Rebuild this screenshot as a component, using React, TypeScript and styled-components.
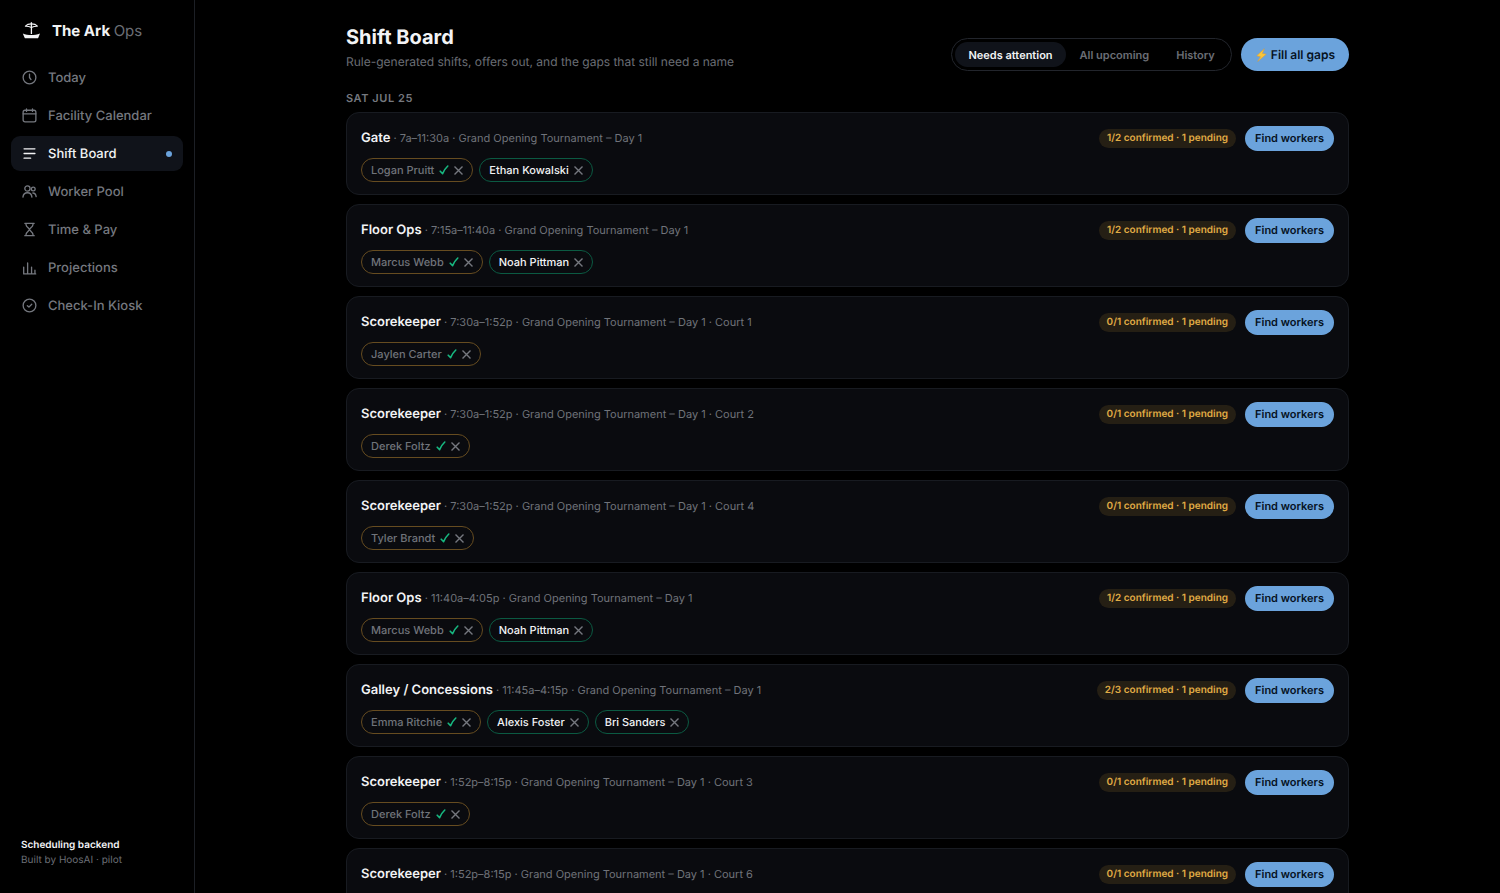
import React from 'react';
import styled, { createGlobalStyle, css } from 'styled-components';

const Global = createGlobalStyle`
  *, *::before, *::after { box-sizing: border-box; }
  html, body, #root { height: 100%; }
  body {
    margin: 0;
    overflow: hidden;
    background: #000;
    color: #f2f3f5;
    font-family: Inter, "Liberation Sans", sans-serif;
    font-size: 13px;
    text-rendering: geometricPrecision;
  }
  button { font-family: inherit; cursor: pointer; text-rendering: inherit; }
  h1, h2, h3, p, ul { margin: 0; padding: 0; }
  ul { list-style: none; }
`;

const Shell = styled.div`
  display: flex;
  height: 100vh;
`;

const Sidebar = styled.aside`
  flex: 0 0 195px;
  display: flex;
  flex-direction: column;
  padding: 19px 11px 25px;
  border-right: 1px solid #1c1f25;
`;

const Brand = styled.div`
  display: flex;
  align-items: center;
  gap: 11px;
  height: 22px;
  margin-bottom: 19px;
  padding: 0 10px;
  font-size: 15px;
  font-weight: 700;
  svg { flex: none; }
`;

const BrandSuffix = styled.span`
  color: #6b6e75;
  font-weight: 400;
`;

const NavList = styled.ul`
  display: flex;
  flex-direction: column;
  gap: 3px;
`;

const NavLink = styled.a<{ $active?: boolean }>`
  display: flex;
  align-items: center;
  gap: 11px;
  height: 35px;
  padding: 0 11px;
  border-radius: 9px;
  color: #75787f;
  font-weight: 500;
  text-decoration: none;
  ${p => p.$active && css`
    background: #10131a;
    color: #f2f3f5;
  `}
  svg { flex: none; }
`;

const ActiveDot = styled.span`
  width: 6px;
  height: 6px;
  margin-left: auto;
  border-radius: 50%;
  background: #6ba3dc;
`;

const SidebarFooter = styled.footer`
  margin-top: auto;
  padding: 0 10px;
  color: #6b6e75;
  font-size: 10px;
  line-height: 15px;
  strong {
    display: block;
    color: #f2f3f5;
    font-weight: 600;
  }
`;

const Main = styled.main`
  flex: 1;
  min-width: 0;
  overflow: hidden;
  padding: 24px 26px 0;
`;

const Content = styled.div`
  max-width: 1003px;
  margin: 0 auto;
`;

const PageHeader = styled.header`
  display: flex;
  align-items: flex-end;
  justify-content: space-between;
  gap: 20px;
  margin-bottom: 20px;
`;

const Title = styled.h1`
  font-size: 20px;
  line-height: 26px;
  font-weight: 700;
`;

const Subtitle = styled.p`
  margin-top: 3px;
  color: #6b6e75;
  font-size: 12px;
  line-height: 18px;
`;

const HeaderActions = styled.div`
  display: flex;
  align-items: center;
  gap: 9px;
`;

const Segmented = styled.div`
  display: flex;
  gap: 1px;
  height: 33px;
  padding: 3px;
  border: 1px solid #22252c;
  border-radius: 17px;
`;

const Segment = styled.button<{ $active?: boolean }>`
  padding: 0 13px;
  border: 0;
  border-radius: 13px;
  background: ${p => (p.$active ? '#10131a' : 'transparent')};
  color: ${p => (p.$active ? '#f2f3f5' : '#6b6e75')};
  font-size: 11px;
  font-weight: 600;
`;

const PrimaryButton = styled.button<{ $small?: boolean }>`
  display: inline-flex;
  align-items: center;
  justify-content: center;
  gap: 3px;
  height: ${p => (p.$small ? 25 : 33)}px;
  padding: 0 ${p => (p.$small ? 10 : 14)}px;
  border: 0;
  border-radius: 17px;
  background: #6ba3dc;
  color: #06121f;
  font-size: ${p => (p.$small ? 11 : 12)}px;
  font-weight: 600;
  white-space: nowrap;
`;

const DayLabel = styled.h2`
  margin-bottom: 7px;
  color: #75787f;
  font-size: 11px;
  line-height: 14px;
  font-weight: 600;
  letter-spacing: 0.05em;
  text-transform: uppercase;
`;

const ShiftList = styled.ul`
  display: flex;
  flex-direction: column;
  gap: 9px;
`;

const ShiftCard = styled.li`
  height: 83px;
  padding: 12px 14px;
  border: 1px solid #181b21;
  border-radius: 13px;
  background: #0a0b0f;
`;

const ShiftTop = styled.div`
  display: flex;
  align-items: center;
  justify-content: space-between;
  height: 26px;
`;

const ShiftInfo = styled.p`
  color: #70737a;
  font-size: 11px;
`;

const Role = styled.strong`
  color: #f2f3f5;
  font-size: 13px;
  font-weight: 600;
`;

const ShiftActions = styled.div`
  display: flex;
  align-items: center;
  gap: 9px;
`;

const StatusPill = styled.span`
  padding: 0 8px;
  border-radius: 10px;
  background: #251f14;
  color: #e0ac45;
  font-size: 10px;
  line-height: 19px;
  font-weight: 600;
`;

const Workers = styled.ul`
  display: flex;
  gap: 6px;
  margin-top: 7px;
`;

const WorkerChip = styled.li<{ $pending?: boolean }>`
  display: flex;
  align-items: center;
  height: 24px;
  padding: 0 9px;
  border: 1px solid ${p => (p.$pending ? '#664c20' : '#0b5a42')};
  border-radius: 12px;
  color: ${p => (p.$pending ? '#70737a' : '#f2f3f5')};
  font-size: 11px;
  font-weight: 500;
`;

const ChipButton = styled.button<{ $confirm?: boolean }>`
  display: flex;
  margin-left: 5px;
  padding: 0;
  border: 0;
  background: none;
  color: ${p => (p.$confirm ? '#17b880' : '#75787f')};
`;

const LineIcon = ({ children }: { children: React.ReactNode }) => (
  <svg width="15" height="15" viewBox="0 0 16 16" fill="none" stroke="currentColor" strokeWidth="1.4" strokeLinecap="round" strokeLinejoin="round" aria-hidden="true">
    {children}
  </svg>
);

const ArkLogo = () => (
  <svg width="20" height="20" viewBox="0 0 20 20" fill="none" stroke="#f2f3f5" aria-hidden="true">
    <path d="M10.4 2.2V14" strokeWidth="1.3" />
    <path d="M4.4 6.2C6.2 4.2 8 3.9 10.4 3.9S14.7 4.200 16.4 6.200C14.400 6.100 12.400 6.500 10.400 7.400C8.400 6.500 6.400 6.100 4.400 6.200Z" strokeWidth="1.1" strokeLinejoin="round" />
    <path d="M1.800 13.600C6.900 15.600 13.600 15.600 19 13.600L17.400 17.400C17.200 18 16.800 18.200 16.200 18.200H4.700C4.100 18.200 3.700 18 3.500 17.400Z" fill="#f2f3f5" stroke="none" />
  </svg>
);

const Bolt = () => (
  <svg width="13" height="14" viewBox="0 0 12 13" aria-hidden="true">
    <path d="M8.6.6 1.600 7.300l3.500.800L2.400 12.600 10.400 5.700l-3.600-.7Z" fill="#fbc638" stroke="#d99d3c" strokeWidth=".5" strokeLinejoin="round" />
  </svg>
);

const Check = () => (
  <svg width="10" height="12" viewBox="0 0 10 12" fill="none" stroke="currentColor" strokeWidth="1.6" strokeLinecap="round" strokeLinejoin="round" aria-hidden="true">
    <path d="M1.2 7.2 3.6 9.6C4.8 6.800 6.400 4.200 8.800 2" />
  </svg>
);

const Cross = () => (
  <svg width="9" height="9" viewBox="0 0 9 9" fill="none" stroke="currentColor" strokeWidth="1.4" aria-hidden="true">
    <path d="m.5.5 8 8M8.500.5l-8 8" />
  </svg>
);

const navItems = [
  { label: 'Today', icon: <><circle cx="8" cy="8" r="6.8" /><path d="M8 4.4V8l1.6 2.2" /></> },
  { label: 'Facility Calendar', icon: <><rect x="1.2" y="2.4" width="13.6" height="12.4" rx="2" /><path d="M1.2 6.2h13.6M4.8 1v2.6M11.2 1v2.6" /></> },
  { label: 'Shift Board', active: true, icon: <path d="M2.2 3h11.6M2.2 8h11.6M2.2 13h7" /> },
  { label: 'Worker Pool', icon: <><circle cx="5.8" cy="4.8" r="2.8" /><path d="M1 14c.3-3 2.1-4.7 4.8-4.7s4.5 1.7 4.8 4.7" /><circle cx="12" cy="5.4" r="2" /><path d="M11.6 9.6c1.9 0 3.1 1.300 3.500 3.800" /></> },
  { label: 'Time & Pay', icon: <path d="M3 1.4h10M3 14.6h10M4.3 1.400v1.400C4.300 4.800 8 7.200 8 8s-3.700 3.200-3.700 5.200v1.400M11.700 1.400v1.400C11.700 4.800 8 7.200 8 8s3.700 3.200 3.700 5.200v1.400" /> },
  { label: 'Projections', icon: <path d="M1.8 7.5v7.3h12.8M6 14.600V3.200M10.200 14.600V7.500M13.800 14.600v-3.800" /> },
  { label: 'Check-In Kiosk', icon: <><circle cx="8" cy="8" r="6.8" /><path d="m5.700 8.200 1.700 1.500 3-3.100" /></> },
];

type Worker = { name: string; pending?: boolean };
type Shift = { role: string; detail: string; status: string; workers: Worker[] };

const event = 'Grand Opening Tournament – Day 1';
const pending = (name: string): Worker => ({ name, pending: true });
const confirmed = (name: string): Worker => ({ name });

const shifts: Shift[] = [
  { role: 'Gate', detail: `7a–11:30a · ${event}`, status: '1/2', workers: [pending('Logan Pruitt'), confirmed('Ethan Kowalski')] },
  { role: 'Floor Ops', detail: `7:15a–11:40a · ${event}`, status: '1/2', workers: [pending('Marcus Webb'), confirmed('Noah Pittman')] },
  { role: 'Scorekeeper', detail: `7:30a–1:52p · ${event} · Court 1`, status: '0/1', workers: [pending('Jaylen Carter')] },
  { role: 'Scorekeeper', detail: `7:30a–1:52p · ${event} · Court 2`, status: '0/1', workers: [pending('Derek Foltz')] },
  { role: 'Scorekeeper', detail: `7:30a–1:52p · ${event} · Court 4`, status: '0/1', workers: [pending('Tyler Brandt')] },
  { role: 'Floor Ops', detail: `11:40a–4:05p · ${event}`, status: '1/2', workers: [pending('Marcus Webb'), confirmed('Noah Pittman')] },
  { role: 'Galley / Concessions', detail: `11:45a–4:15p · ${event}`, status: '2/3', workers: [pending('Emma Ritchie'), confirmed('Alexis Foster'), confirmed('Bri Sanders')] },
  { role: 'Scorekeeper', detail: `1:52p–8:15p · ${event} · Court 3`, status: '0/1', workers: [pending('Derek Foltz')] },
  { role: 'Scorekeeper', detail: `1:52p–8:15p · ${event} · Court 6`, status: '0/1', workers: [] },
];

export default function App() {
  return (
    <>
      <Global />
      <Shell>
        <Sidebar>
          <Brand>
            <ArkLogo />
            <span>The Ark <BrandSuffix>Ops</BrandSuffix></span>
          </Brand>
          <nav aria-label="Main">
            <NavList>
              {navItems.map(item => (
                <li key={item.label}>
                  <NavLink href="#" $active={item.active} aria-current={item.active ? 'page' : undefined}>
                    <LineIcon>{item.icon}</LineIcon>
                    {item.label}
                    {item.active && <ActiveDot />}
                  </NavLink>
                </li>
              ))}
            </NavList>
          </nav>
          <SidebarFooter>
            <strong>Scheduling backend</strong>
            Built by HoosAI · pilot
          </SidebarFooter>
        </Sidebar>
        <Main>
          <Content>
            <PageHeader>
              <div>
                <Title>Shift Board</Title>
                <Subtitle>Rule-generated shifts, offers out, and the gaps that still need a name</Subtitle>
              </div>
              <HeaderActions>
                <Segmented>
                  <Segment type="button" $active>Needs attention</Segment>
                  <Segment type="button">All upcoming</Segment>
                  <Segment type="button">History</Segment>
                </Segmented>
                <PrimaryButton type="button"><Bolt />Fill all gaps</PrimaryButton>
              </HeaderActions>
            </PageHeader>
            <DayLabel>Sat Jul 25</DayLabel>
            <ShiftList>
              {shifts.map((shift, i) => (
                <ShiftCard key={i}>
                  <ShiftTop>
                    <ShiftInfo><Role>{shift.role}</Role> · {shift.detail}</ShiftInfo>
                    <ShiftActions>
                      <StatusPill>{shift.status} confirmed · 1 pending</StatusPill>
                      <PrimaryButton type="button" $small>Find workers</PrimaryButton>
                    </ShiftActions>
                  </ShiftTop>
                  <Workers>
                    {shift.workers.map(worker => (
                      <WorkerChip key={worker.name} $pending={worker.pending}>
                        {worker.name}
                        {worker.pending && (
                          <ChipButton type="button" $confirm aria-label={`Confirm ${worker.name}`}><Check /></ChipButton>
                        )}
                        <ChipButton type="button" aria-label={`Remove ${worker.name}`}><Cross /></ChipButton>
                      </WorkerChip>
                    ))}
                  </Workers>
                </ShiftCard>
              ))}
            </ShiftList>
          </Content>
        </Main>
      </Shell>
    </>
  );
}
